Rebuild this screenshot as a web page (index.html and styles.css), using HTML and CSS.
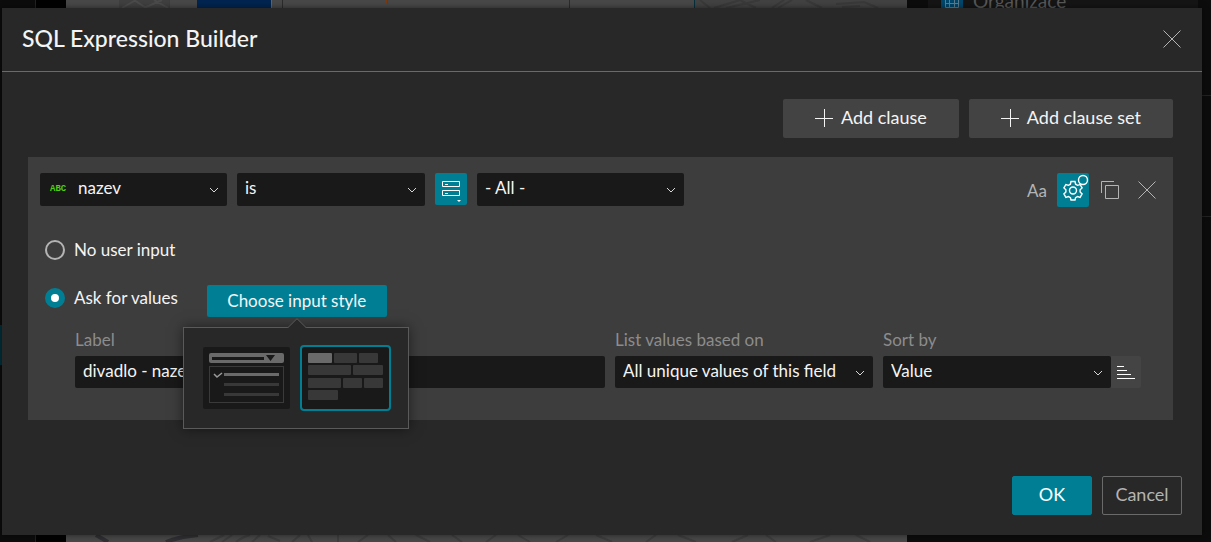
FILE: index.html
```
<!DOCTYPE html>
<html lang="en">
<head>
  <meta charset="UTF-8">
  <meta name="viewport" content="width=device-width, initial-scale=1">
  <title>SQL Expression Builder</title>
  <link rel="stylesheet" href="styles.css">
</head>
<body>
  <!-- Dimmed app behind the dialog -->
  <div class="backdrop" aria-hidden="true">
    <div class="app-rail"><div class="rail-item"></div></div>
    <div class="app-gutter"></div>
    <div class="app-map">
      <svg viewBox="0 0 841 542" preserveAspectRatio="xMinYMin slice">
        <rect width="841" height="542" fill="#484848"/>
        <rect x="53" width="50" height="8" fill="#404040"/>
        <path d="M56 8l14-8M68 0l12 8M78 8l18-8M88 0l14 8" stroke="#4b4b4b" stroke-width="2" fill="none"/>
        <rect x="103" width="1" height="8" fill="#24484c"/>
        <rect x="131" width="74" height="8" fill="#002550"/>
        <rect x="205" width="1" height="8" fill="#5b6470"/>
        <rect x="216" width="1" height="8" fill="#2c2c2c"/>
        <rect x="320" width="1" height="4" fill="#7a3b10"/>
        <rect x="321" width="1" height="4" fill="#1d4f70"/>
        <rect x="503" width="1" height="8" fill="#2c2c2c"/>
        <rect x="628" width="1" height="8" fill="#06303c"/>
        <rect x="629" width="212" height="8" fill="#424242"/>
        <path d="M634 0l10 8M648 8l26-8M660 8l34-8M674 0l16 8M706 8l12-8M712 8l14-8M740 0l16 8M770 4l28-2 14 6M776 7l18-1" stroke="#3a3a3a" stroke-width="2" fill="none"/>
        <path d="M30 535l12 7M100 542q12-5 32-7" stroke="#303034" stroke-width="4" fill="none"/>
        <path d="M144 542l14-7M156 542l10-7M170 542q6-5 14-7M186 542l8-7M202 536l12 5M226 542l8-7M242 535l4 7M272 535v7M292 542l10-7M322 535l8 7M350 535l14 7M386 535l10 7M420 542l10-7M452 535l12 7M490 542l12-7M530 535l16 7M580 542l10-7M612 535l18 7M666 542l16-7M700 535l10 7M744 542l20-7M790 535l14 7" stroke="#3e3e3e" stroke-width="2" fill="none"/>
      </svg>
    </div>
    <div class="app-side">
      <div class="side-item">
        <svg class="side-icon" width="22" height="22" viewBox="0 0 22 22">
          <rect width="22" height="22" fill="#00466b"/>
          <path d="M4.500 5.500h13v12h-13zM4.500 9.500h13M4.500 13.500h13M8.500 9.500v8M13.500 9.500v8" fill="none" stroke="#5a7c8c"/>
        </svg>
        <span>Organizace</span>
      </div>
      <div class="side-rule"></div>
      <div class="side-rule"></div>
    </div>
  </div>

  <main class="dialog" role="dialog" aria-labelledby="dialogTitle">
    <header class="dialog-header">
      <h1 id="dialogTitle">SQL Expression Builder</h1>
      <button class="icon-btn close-btn" aria-label="Close">
        <svg width="18" height="18" viewBox="0 0 18 18"><path d="M0.500 0.500l17 17M17.500 0.500l-17 17"/></svg>
      </button>
    </header>

    <div class="dialog-body">
      <div class="toolbar">
        <button class="add-btn">
          <svg width="18" height="18" viewBox="0 0 18 18"><path d="M9.500 0v18M0 9.500h18"/></svg>
          <span>Add clause</span>
        </button>
        <button class="add-btn">
          <svg width="18" height="18" viewBox="0 0 18 18"><path d="M9.500 0v18M0 9.500h18"/></svg>
          <span>Add clause set</span>
        </button>
      </div>

      <section class="clause">
        <div class="clause-row">
          <div class="select field-select">
            <span class="type-tag">ABC</span>
            <select aria-label="Field"><option>nazev</option></select>
            <svg class="chevron" width="10" height="6" viewBox="0 0 10 6"><path d="M1 1l4 4 4-4"/></svg>
          </div>
          <div class="select operator-select">
            <select aria-label="Operator"><option>is</option></select>
            <svg class="chevron" width="10" height="6" viewBox="0 0 10 6"><path d="M1 1l4 4 4-4"/></svg>
          </div>
          <button class="icon-btn active source-btn" aria-label="Value source">
            <svg width="32" height="32" viewBox="0 0 32 32">
              <path d="M7.500 8.500h17v5h-17zM7.500 17.500h17v5h-17z"/>
              <path d="M10 11.500h3M10 20.500h3"/>
              <path class="solid" d="M22 27h4l-2 2z"/>
            </svg>
          </button>
          <div class="select value-select">
            <select aria-label="Value"><option>- All -</option></select>
            <svg class="chevron" width="10" height="6" viewBox="0 0 10 6"><path d="M1 1l4 4 4-4"/></svg>
          </div>
          <div class="clause-tools">
            <button class="icon-btn case-btn" aria-label="Case sensitive">Aa</button>
            <button class="icon-btn active" aria-label="Ask for values settings">
              <svg width="32" height="34" viewBox="0 0 32 34">
                <path class="gear" d="M14 8.500h4l.6 2.700 1.900 1.100 2.600-.8 2 3.400-2 1.900v2.200l2 1.900-2 3.400-2.600-.8-1.900 1.100-.6 2.400h-4l-.6-2.400-1.900-1.100-2.600.8-2-3.400 2-1.900v-2.200l-2-1.900 2-3.400 2.600.8 1.900-1.100z"/>
                <circle class="gear" cx="16" cy="17.500" r="3.500"/>
                <circle class="gear-dot" cx="26" cy="7" r="4.500"/>
              </svg>
            </button>
            <button class="icon-btn copy-btn" aria-label="Duplicate clause">
              <svg width="18" height="18" viewBox="0 0 18 18"><path d="M4.500 4.500h13v13h-13zM.5 12V.5H13"/></svg>
            </button>
            <button class="icon-btn delete-btn" aria-label="Delete clause">
              <svg width="18" height="18" viewBox="0 0 18 18"><path d="M0.500 0.500l17 17M17.500 0.500l-17 17"/></svg>
            </button>
          </div>
        </div>

        <div class="option-row">
          <label class="radio"><input type="radio" name="ask"> <span>No user input</span></label>
        </div>

        <div class="option-row">
          <label class="radio"><input type="radio" name="ask" checked> <span>Ask for values</span></label>
          <div class="style-picker">
            <button class="style-btn" aria-expanded="true">Choose input style</button>
            <div class="popup">
              <svg class="popup-arrow" width="20" height="10" viewBox="0 0 20 10"><path d="M0.500 10L10 .7 19.500 10"/></svg>
              <button class="tile" aria-label="Drop-down list">
                <svg width="87" height="62" viewBox="0 0 87 62">
                  <rect x="6" y="6" width="75" height="10" rx="2" fill="#6a6a6a"/>
                  <path d="M9 10h52v3H9zM63 8h9l-4.500 6z" fill="#191919"/>
                  <rect x="6.500" y="19.500" width="74" height="36" fill="none" stroke="#3a3a3a"/>
                  <path d="M11 27l3 3 5-4" fill="none" stroke="#9a9a9a" stroke-width="1.500"/>
                  <path d="M21 26h55v3H21z" fill="#6a6a6a"/>
                  <path d="M21 36h55v3H21zM21 46h55v3H21z" fill="#383838"/>
                </svg>
              </button>
              <button class="tile selected" aria-label="Button list" aria-pressed="true">
                <svg width="87" height="62" viewBox="0 0 87 62">
                  <rect x="6" y="6" width="24" height="10" rx="1" fill="#6a6a6a"/>
                  <g fill="#383838">
                    <rect x="32" y="6" width="23" height="10" rx="1"/>
                    <rect x="57" y="6" width="19" height="10" rx="1"/>
                    <rect x="6" y="18" width="43" height="10" rx="1"/>
                    <rect x="51" y="18" width="30" height="10" rx="1"/>
                    <rect x="6" y="31" width="33" height="10" rx="1"/>
                    <rect x="41" y="31" width="19" height="10" rx="1"/>
                    <rect x="62" y="31" width="19" height="10" rx="1"/>
                    <rect x="6" y="43" width="30" height="10" rx="1"/>
                  </g>
                </svg>
              </button>
            </div>
          </div>
        </div>

        <div class="fields">
          <div class="field grow">
            <label for="label">Label</label>
            <input id="label" class="text-input" type="text" value="divadlo - nazev">
          </div>
          <div class="field list-field">
            <label for="basedOn">List values based on</label>
            <div class="select">
              <select id="basedOn"><option>All unique values of this field</option></select>
              <svg class="chevron" width="10" height="6" viewBox="0 0 10 6"><path d="M1 1l4 4 4-4"/></svg>
            </div>
          </div>
          <div class="field sort-field">
            <label for="sortBy">Sort by</label>
            <div class="sort-group">
              <div class="select">
                <select id="sortBy"><option>Value</option></select>
                <svg class="chevron" width="10" height="6" viewBox="0 0 10 6"><path d="M1 1l4 4 4-4"/></svg>
              </div>
              <button class="sort-btn" aria-label="Sort ascending">
                <svg width="18" height="14" viewBox="0 0 18 14"><path d="M0 1.500h7M0 5.500h10M0 9.500h14M0 13.500h18"/></svg>
              </button>
            </div>
          </div>
        </div>
      </section>
    </div>

    <footer class="dialog-footer">
      <button class="btn primary">OK</button>
      <button class="btn">Cancel</button>
    </footer>
  </main>
</body>
</html>
```
FILE: styles.css
```
* {
  box-sizing: border-box;
  margin: 0;
  padding: 0;
}
body {
  font-family: Lato, "Open Sans", sans-serif;
  font-size: 17px;
  color: #f4f4f4;
  background: #0c0c0c;
  min-height: 100vh;
  padding: 8px 9px 7px 2px;
  position: relative;
  display: flex;
  flex-direction: column;
}
button,
input,
select {
  font: inherit;
  color: inherit;
  border: none;
}
button {
  cursor: pointer;
}
svg {
  display: block;
  fill: none;
  stroke: currentColor;
  flex-shrink: 0;
}
svg rect,
svg [fill]:not([fill="none"]) {
  stroke: none;
}
svg rect[stroke] {
  stroke: #3a3a3a;
}

/* App behind the dialog */
.backdrop {
  position: absolute;
  inset: 0;
  display: flex;
  overflow: hidden;
}
.app-rail {
  width: 36px;
  padding-top: 325px;
  border-right: 1px solid #222;
}
.rail-item {
  height: 40px;
  background: #02303a;
}
.app-gutter {
  width: 30px;
  background: #020202;
}
.app-map {
  flex: 1;
  overflow: hidden;
}
.app-map svg {
  width: 100%;
  height: 100%;
}
.app-side {
  width: 304px;
}
.side-item {
  display: flex;
  align-items: flex-end;
  gap: 10px;
  height: 12px;
  margin: 0 13px 0 21px;
  padding-left: 13px;
  background: #151515;
  font-size: 19px;
  line-height: 22px;
  color: #585858;
}
.side-rule {
  height: 1px;
  margin-top: 83px;
  background: #222;
}
.side-rule + .side-rule {
  margin-top: 120px;
}

/* Dialog */
.dialog {
  position: relative;
  flex: 1;
  display: flex;
  flex-direction: column;
  background: #282828;
  box-shadow: 0 0 6px rgba(0, 0, 0, 0.5);
}
.dialog-header {
  display: flex;
  align-items: center;
  justify-content: space-between;
  height: 64px;
  padding: 0 20px 2px;
  border-bottom: 1px solid #6a6a6a;
}
.dialog-header h1 {
  padding-bottom: 2px;
  font-size: 23px;
  line-height: 28px;
  font-weight: 500;
}
.dialog-body {
  flex: 1;
  padding: 27px 29px 0 26px;
}
.toolbar {
  display: flex;
  justify-content: flex-end;
  gap: 10px;
  margin-bottom: 19px;
}
.add-btn {
  display: flex;
  align-items: center;
  gap: 8px;
  height: 39px;
  padding: 0 32px 2px;
  font-size: 18px;
  background: #434343;
  border-radius: 2px;
}
.add-btn span {
  padding-bottom: 2px;
}
.icon-btn {
  display: flex;
  align-items: center;
  justify-content: center;
  background: none;
  color: #b4b4b4;
  border-radius: 2px;
}
.icon-btn.active {
  background: #007f94;
  color: #fff;
}
.close-btn {
  padding: 1px;
}

/* Clause */
.clause {
  padding: 16px 17px 32px 12px;
  background: #3d3d3d;
}
.clause-row {
  display: flex;
  align-items: flex-start;
  gap: 10px;
  margin-bottom: 30px;
}
.select {
  position: relative;
  height: 32px;
}
.clause-row .select {
  height: 33px;
}
.select select,
.text-input {
  appearance: none;
  width: 100%;
  height: 100%;
  padding: 0 26px 4px 8px;
  background: #191919;
  border-radius: 2px;
}
.chevron {
  position: absolute;
  right: 8px;
  top: 14px;
  color: #d8d8d8;
  pointer-events: none;
}
.field-select {
  width: 187px;
}
.field-select select {
  padding-left: 38px;
}
.type-tag {
  position: absolute;
  left: 10px;
  top: 10px;
  font: bold 9px/12px "Liberation Mono", monospace;
  color: #4fd010;
}
.operator-select {
  width: 188px;
}
.value-select {
  width: 207px;
}
.solid {
  fill: currentColor;
  stroke: none;
}
.clause-tools {
  display: flex;
  align-items: center;
  margin-left: auto;
}
.case-btn {
  margin-right: 10px;
}
.copy-btn {
  margin-left: 12px;
}
.delete-btn {
  margin-left: 19px;
}
.gear {
  stroke-width: 1.4;
}
.gear-dot {
  fill: #007f94;
  stroke-width: 1.4;
}

/* User input options */
.option-row {
  display: flex;
  align-items: flex-start;
  gap: 29px;
  height: 32px;
  margin-bottom: 16px;
  padding-left: 5px;
}
.option-row + .option-row {
  margin-bottom: 12px;
}
.radio {
  display: flex;
  align-items: center;
  gap: 9px;
  height: 26px;
}
.radio span {
  padding-bottom: 2px;
}
.radio input {
  appearance: none;
  width: 20px;
  height: 20px;
  border: 2px solid #b4b4b4;
  border-radius: 50%;
}
.radio input:checked {
  border: 6px solid #007f94;
  background: #fff;
}
.style-picker {
  position: relative;
}
.style-btn {
  width: 180px;
  height: 32px;
  padding-bottom: 2px;
  background: #007f94;
  border-radius: 2px;
}
.popup {
  position: absolute;
  left: -24px;
  top: 42px;
  z-index: 1;
  display: flex;
  gap: 8px;
  padding: 17px;
  background: #282828;
  border: 1px solid #5a5a5a;
  box-shadow: 0 0 12px rgba(0, 0, 0, 0.5);
}
.popup-arrow {
  position: absolute;
  left: 103px;
  top: -10px;
  fill: #282828;
  stroke: #5a5a5a;
}
.tile {
  background: #191919;
  background-clip: padding-box;
  border: 2px solid transparent;
  border-radius: 4px;
}
.tile.selected {
  border-color: #007f94;
}

/* Label, list and sort fields */
.fields {
  display: flex;
  gap: 10px;
  padding: 0 15px 0 35px;
}
.field label {
  display: block;
  line-height: 21px;
  margin-bottom: 6px;
  color: #8c8c8c;
}
.grow {
  flex: 1;
}
.text-input {
  height: 32px;
}
.list-field,
.sort-field {
  width: 258px;
}
.sort-group {
  display: flex;
}
.sort-group .select {
  flex: 1;
}
.sort-btn {
  display: flex;
  align-items: center;
  justify-content: center;
  width: 30px;
  color: #fff;
  background: #444;
  border-radius: 0 2px 2px 0;
}

/* Footer */
.dialog-footer {
  display: flex;
  justify-content: flex-end;
  gap: 10px;
  padding: 20px;
}
.btn {
  width: 80px;
  height: 39px;
  padding-bottom: 4px;
  font-size: 18px;
  color: #b4b4b4;
  background: none;
  border: 1px solid #6a6a6a;
  border-radius: 2px;
}
.btn.primary {
  color: #fff;
  background: #007f94;
  border-color: #007f94;
}
```
